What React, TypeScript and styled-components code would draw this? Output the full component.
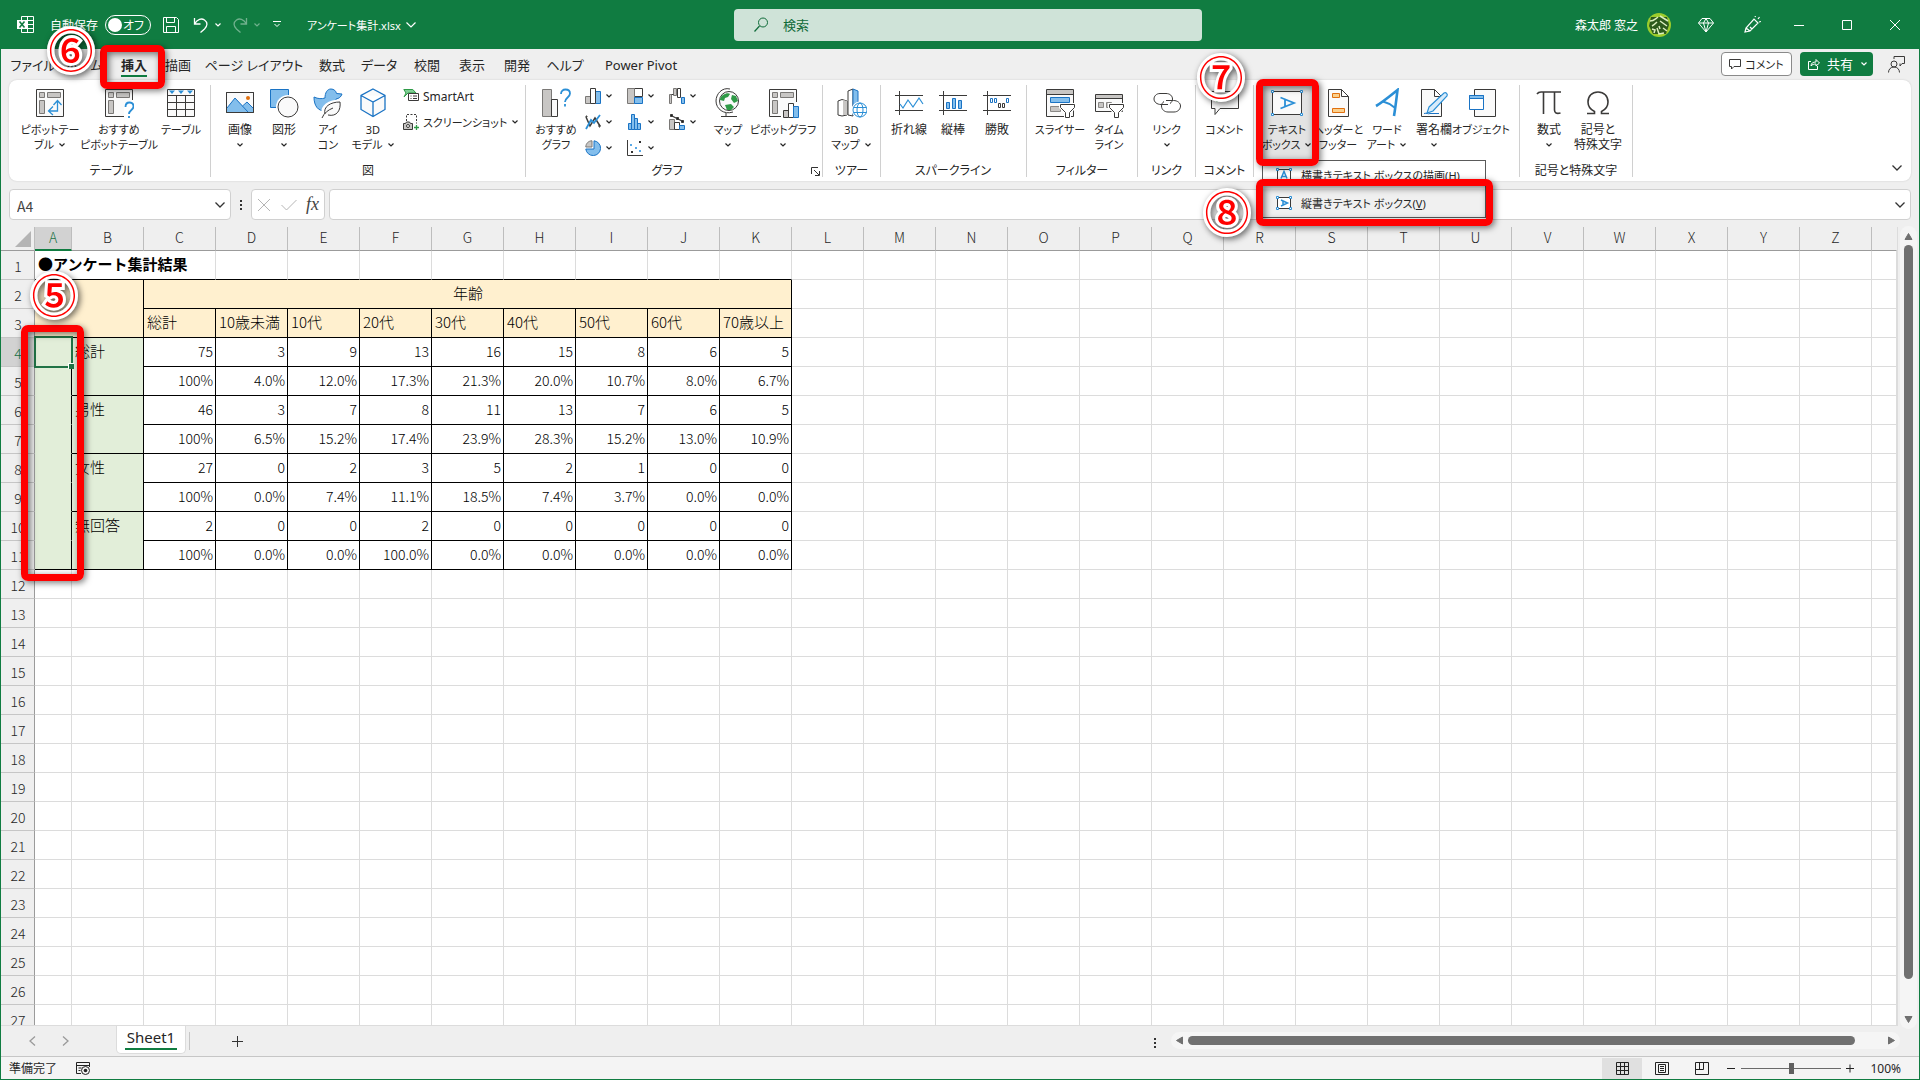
import React from "react";
import styled, { createGlobalStyle, css } from "styled-components";

const GREEN = "#107c41";
const INK = "#262626";
const BLUE = "#2b8fd6";
const SKY = "#83beec";
const GREY = "#c8c6c4";
const UI_FONT = `"Noto Sans", "Noto Sans CJK JP", sans-serif`;
const CELL_FONT = `"Noto Sans CJK JP", sans-serif`;

const GlobalStyle = createGlobalStyle`
  *, *::before, *::after { box-sizing: border-box; }
  body { margin: 0; background: #efefef; }
  button, input { font: inherit; color: inherit; }
  button { padding: 0; border: 0; background: none; }
  svg { display: block; flex: none; }
`;

const Window = styled.div`
  position: relative;
  display: flex;
  flex-direction: column;
  height: 100vh;
  overflow: hidden;
  border: 1px solid ${GREEN};
  border-top: 0;
  background: #efefef;
  color: ${INK};
  font-family: ${UI_FONT};
  font-size: 12px;
  font-feature-settings: "palt";
`;

/* ---------- title bar ---------- */

const TitleBar = styled.header`
  display: grid;
  grid-template-columns: 1fr 468px 1fr;
  align-items: center;
  flex: none;
  height: 49px;
  padding: 8px 0 8px 16px;
  background: ${GREEN};
  color: #fff;
`;

const TitleLeft = styled.div`
  display: flex;
  align-items: center;
`;

const AutoSave = styled.label`
  display: flex;
  align-items: center;
  gap: 7px;
  width: 102px;
  margin: 0 11px 0 16px;
  white-space: nowrap;
`;

const Pill = styled.span`
  display: flex;
  align-items: center;
  justify-content: space-between;
  width: 46px;
  height: 20px;
  padding: 0 6px 0 2px;
  border: 1px solid #fff;
  border-radius: 10px;
`;

const PillKnob = styled.input`
  appearance: none;
  width: 14px;
  height: 14px;
  margin: 0;
  border-radius: 50%;
  background: #fff;
`;

const BarButton = styled.button<{ $w: number; $dim?: boolean }>`
  display: flex;
  align-items: center;
  gap: 5px;
  width: ${(p) => p.$w}px;
  opacity: ${(p) => (p.$dim ? 0.4 : 1)};
`;

const FileName = styled.button`
  display: flex;
  align-items: center;
  gap: 5px;
  font-size: 11px;
  white-space: nowrap;
`;

const Search = styled.label`
  display: flex;
  align-items: center;
  gap: 14px;
  height: 32px;
  padding: 0 20px;
  border-radius: 4px;
  background: #cfe3d8;
  color: #0f6b39;
`;

const SearchInput = styled.input`
  flex: 1;
  min-width: 0;
  padding: 0;
  border: 0;
  outline: 0;
  background: transparent;
  font-size: 13px;
  &::placeholder { color: #0f6b39; opacity: 1; }
`;

const TitleRight = styled.div`
  display: flex;
  align-items: center;
  justify-content: flex-end;
`;

const UserName = styled.span`
  margin-right: 9px;
`;

const Avatar = styled.span`
  margin-right: 12px;
`;

const CaptionButton = styled.button<{ $w: number }>`
  display: flex;
  justify-content: center;
  width: ${(p) => p.$w}px;
`;

/* ---------- tabs ---------- */

const TabStrip = styled.nav`
  display: flex;
  align-items: center;
  flex: none;
  height: 31px;
  padding: 0 14px 0 6px;
`;

const Tab = styled.button<{ $w: number; $active?: boolean }>`
  display: flex;
  justify-content: center;
  width: ${(p) => p.$w}px;
  font-size: 13px;
  line-height: 20px;
  white-space: nowrap;
  ${(p) =>
    p.$active &&
    css`
      font-weight: 700;
      text-decoration: underline;
      text-decoration-color: ${GREEN};
      text-decoration-thickness: 2px;
      text-underline-offset: 5px;
    `}
`;

const Spacer = styled.span`
  flex: 1;
`;

const PlainAction = styled.button`
  display: flex;
  align-items: center;
  justify-content: center;
  gap: 4px;
  width: 71px;
  height: 24px;
  margin: 0 8px 2px 0;
  border: 1px solid #8a8a8a;
  border-radius: 4px;
  background: #fff;
  font-size: 11px;
`;

const ShareAction = styled.button`
  display: flex;
  align-items: center;
  justify-content: space-between;
  width: 73px;
  height: 24px;
  margin: 0 15px 2px 0;
  padding: 0 5px 0 8px;
  border-radius: 4px;
  background: ${GREEN};
  color: #fff;
  font-size: 13px;
`;

/* ---------- ribbon ---------- */

const Ribbon = styled.section`
  position: relative;
  display: flex;
  flex: none;
  margin: 0 8px;
  padding: 5px 0 4px;
  border-radius: 8px;
  background: #fff;
  box-shadow: 0 0 2px rgba(0, 0, 0, 0.16);
`;

const Group = styled.div<{ $w: number; $pad?: number }>`
  display: flex;
  flex-direction: column;
  flex: none;
  width: ${(p) => p.$w}px;
  padding-left: ${(p) => p.$pad ?? 0}px;
  border-right: 1px solid #d0d0d0;
`;

const Tools = styled.div<{ $center?: boolean }>`
  display: flex;
  height: 77px;
  justify-content: ${(p) => (p.$center ? "center" : "flex-start")};
`;

const GroupLabel = styled.div<{ $pad?: number }>`
  display: flex;
  justify-content: center;
  height: 15px;
  padding-right: ${(p) => p.$pad ?? 0}px;
  line-height: 17px;
  white-space: nowrap;
`;

const Launcher = styled.button`
  position: absolute;
  left: 802px;
  bottom: 5px;
`;

const ToolButton = styled.button<{ $w: number; $on?: boolean }>`
  display: flex;
  flex-direction: column;
  align-items: center;
  flex: none;
  width: ${(p) => p.$w}px;
  padding-top: 3px;
  background: ${(p) => (p.$on ? "#e3e3e3" : "transparent")};
`;

const ToolText = styled.span<{ $compact?: boolean }>`
  display: flex;
  flex-direction: column;
  align-items: center;
  margin-top: 4px;
  font-size: ${(p) => (p.$compact ? 11 : 12)}px;
  line-height: 15px;
  white-space: nowrap;
`;

const ToolLine = styled.span`
  display: flex;
  align-items: center;
  justify-content: center;
  gap: 4px;
  height: 15px;
`;

const MiniList = styled.div`
  display: grid;
  grid-auto-rows: 22px;
  gap: 4px 0;
  margin-left: 7px;
`;

const MiniGrid = styled(MiniList)`
  grid-template-columns: repeat(3, 42px);
`;

const MiniButton = styled.button<{ $compact?: boolean }>`
  display: flex;
  align-items: center;
  gap: 4px;
  font-size: ${(p) => (p.$compact ? 11 : 12)}px;
  white-space: nowrap;
`;

const Collapse = styled.button`
  margin: auto 8px 5px auto;
`;

const Menu = styled.div`
  position: absolute;
  z-index: 2;
  top: 80px;
  left: 1253px;
  width: 224px;
  border: 1px solid #5a5a5a;
  background: #fff;
`;

const MenuItem = styled.button<{ $on?: boolean }>`
  display: flex;
  align-items: center;
  gap: 9px;
  width: 100%;
  height: 28px;
  padding-left: 13px;
  background: ${(p) => (p.$on ? "#f0f0f0" : "#fff")};
  font-size: 11px;
  white-space: nowrap;
`;

/* ---------- formula bar ---------- */

const FormulaBar = styled.div`
  display: flex;
  flex: none;
  height: 46px;
  padding: 8px 8px 7px;
`;

const Box = styled.div<{ $w?: number }>`
  display: flex;
  align-items: center;
  flex: ${(p) => (p.$w ? `0 0 ${p.$w}px` : "1")};
  min-width: 0;
  padding-right: 4px;
  border: 1px solid #d0d0d0;
  border-radius: 4px;
  background: #fff;
`;

const BoxInput = styled.input`
  flex: 1;
  min-width: 0;
  padding: 2px 7px 0;
  border: 0;
  outline: 0;
  background: transparent;
  color: #444;
  font-family: ${CELL_FONT};
  font-size: 14px;
`;

const Dots = styled.span`
  display: flex;
  flex-direction: column;
  align-items: center;
  justify-content: center;
  gap: 2px;
  width: 20px;
`;

const Dot = styled.i`
  width: 2px;
  height: 2px;
  background: #333;
`;

const FxBox = styled(Box)`
  justify-content: space-between;
  margin-right: 4px;
  padding: 0 5px 0 5px;
`;

const Fx = styled.button`
  color: #444;
  font-family: "Liberation Serif", serif;
  font-size: 18px;
  font-style: italic;
`;

/* ---------- sheet ---------- */

const SheetArea = styled.main`
  display: flex;
  flex: 1;
  min-height: 0;
`;

const Viewport = styled.div`
  flex: 1;
  min-width: 0;
  overflow: hidden;
  border-right: 1px solid #dcdcdc;
  border-bottom: 1px solid #dcdcdc;
`;

const Grid = styled.table`
  width: 100%;
  table-layout: fixed;
  border-collapse: separate;
  border-spacing: 0;
  font-family: ${CELL_FONT};
  font-feature-settings: normal;
  font-size: 15px;
`;

const Col = styled.col<{ $w?: number }>`
  width: ${(p) => (p.$w ? `${p.$w}px` : "auto")};
`;

const ColHead = styled.th<{ $on?: boolean; $open?: boolean }>`
  height: 24px;
  padding: 0;
  border-right: 1px solid ${(p) => (p.$open ? "#efefef" : "#bdbdbd")};
  border-bottom: ${(p) => (p.$on ? `2px solid ${GREEN}` : "1px solid #9b9b9b")};
  background: ${(p) => (p.$on ? "#d2d2d2" : "#efefef")};
  color: ${(p) => (p.$on ? "#217346" : INK)};
  font-size: 14px;
  font-weight: 300;
  line-height: 20px;
  vertical-align: top;
`;

const Corner = styled.th`
  height: 24px;
  padding: 0 3px 3px 14px;
  border-right: 1px solid #bdbdbd;
  border-bottom: 1px solid #9b9b9b;
  vertical-align: bottom;
`;

const RowHead = styled.th<{ $on?: boolean }>`
  height: 29px;
  padding: 2px 0 0 1px;
  border-right: 1px solid #9b9b9b;
  border-bottom: 1px solid #c6c6c6;
  background: ${(p) => (p.$on ? "#d2d2d2" : "#efefef")};
  color: ${(p) => (p.$on ? "#217346" : INK)};
  font-size: 14px;
  font-weight: 300;
  line-height: 26px;
`;

const FILLS = { none: "#fff", head: "#fff0cf", side: "#e2eed9" };

type Edge = "line" | "grid" | "none";
const EDGES = { line: "#000", grid: "#dcdcdc", none: "transparent" };

const Cell = styled.td<{
  $right?: Edge;
  $bottom?: Edge;
  $fill?: keyof typeof FILLS;
  $align?: "left" | "right" | "center";
  $bold?: boolean;
}>`
  position: relative;
  height: 29px;
  padding: 0 2px 0 3px;
  border-right: 1px solid ${(p) => EDGES[p.$right ?? "grid"]};
  border-bottom: 1px solid ${(p) => EDGES[p.$bottom ?? "grid"]};
  background: ${(p) => FILLS[p.$fill ?? "none"]};
  color: #000;
  font-size: ${(p) => (p.$align === "right" ? 14 : 15)}px;
  font-weight: ${(p) => (p.$bold ? 700 : 300)};
  line-height: 26px;
  text-align: ${(p) => p.$align ?? "left"};
  vertical-align: top;
  white-space: nowrap;
`;

const Selection = styled.span`
  position: absolute;
  z-index: 1;
  inset: -2px -2px -2px -1px;
  border: 2px solid #217346;
  &::after {
    content: "";
    position: absolute;
    right: -3px;
    bottom: -3px;
    width: 6px;
    height: 6px;
    border: 1px solid #fff;
    border-width: 1px 0 0 1px;
    background: #217346;
  }
`;

const VScroll = styled.div`
  display: flex;
  flex-direction: column;
  align-items: center;
  flex: none;
  gap: 4px;
  width: 17px;
  margin: -1px 2px -3px;
  padding: 6px 0 5px;
  border-radius: 9px;
  background: #f5f5f5;
`;

const VThumb = styled.div`
  width: 9px;
  flex: 1;
  margin-bottom: 32px;
  border-radius: 5px;
  background: #707070;
`;

const SheetBar = styled.div`
  display: flex;
  align-items: flex-start;
  flex: none;
  height: 31px;
  border-bottom: 1px solid #c6c6c6;
`;

const NavArrows = styled.div`
  display: flex;
  align-items: center;
  gap: 26px;
  width: 115px;
  height: 30px;
  padding-left: 28px;
`;

const SheetTab = styled.button`
  width: 70px;
  height: 28px;
  padding-bottom: 3px;
  border: 1px solid #dcdcdc;
  border-top: 0;
  border-radius: 0 0 5px 5px;
  background: #fff;
  font-size: 15px;
  line-height: 22px;
`;

const SheetTabText = styled.span`
  display: block;
  margin: 0 8px;
  border-bottom: 2px solid ${GREEN};
`;

const AddSheet = styled.button`
  height: 18px;
  margin: 6px 0 0 3px;
  padding-left: 42px;
  border-left: 1px solid #c6c6c6;
`;

const HScroll = styled.div`
  display: flex;
  align-items: center;
  width: 729px;
  height: 17px;
  margin: 6px 19px 0 14px;
  padding: 0 4px;
  border-radius: 9px;
  background: #f5f5f5;
`;

const HThumb = styled.div`
  flex: 1;
  height: 9px;
  margin: 0 32px 0 4px;
  border-radius: 5px;
  background: #707070;
`;

const StatusBar = styled.footer`
  display: flex;
  align-items: center;
  flex: none;
  height: 22px;
  padding: 0 18px 0 8px;
  background: #f4f4f4;
`;

const Macro = styled.button`
  margin-left: 19px;
`;

const ViewButton = styled.button<{ $on?: boolean }>`
  display: flex;
  align-items: center;
  justify-content: center;
  width: 40px;
  height: 21px;
  background: ${(p) => (p.$on ? "#e0e0e0" : "transparent")};
`;

const ZoomRange = styled.input`
  appearance: none;
  width: 100px;
  height: 12px;
  margin: 0 5px;
  background: linear-gradient(#6a6a6a, #6a6a6a) center / 100% 1px no-repeat;
  &::-webkit-slider-thumb {
    appearance: none;
    width: 5px;
    height: 11px;
    background: #606060;
  }
`;

const ZoomText = styled.output`
  width: 34px;
  margin-left: 12px;
  text-align: right;
`;

/* ---------- call-outs ---------- */

const Frame = styled.div<{ $x: number; $y: number; $w: number; $h: number }>`
  position: absolute;
  z-index: 5;
  left: ${(p) => p.$x}px;
  top: ${(p) => p.$y}px;
  width: ${(p) => p.$w}px;
  height: ${(p) => p.$h}px;
  border: 7px solid #f00;
  border-radius: 7px;
  box-shadow: 2px 2px 6px rgba(0, 0, 0, 0.5), inset 2px 2px 7px rgba(0, 0, 0, 0.55);
  pointer-events: none;
`;

const StepMark = styled.span<{ $x: number; $y: number }>`
  position: absolute;
  z-index: 6;
  left: ${(p) => p.$x}px;
  top: ${(p) => p.$y}px;
  width: 48px;
  height: 48px;
  color: #f00;
  font-family: ${CELL_FONT};
  font-feature-settings: normal;
  font-size: 45px;
  font-weight: 500;
  line-height: 46px;
  text-align: center;
  -webkit-text-stroke: 6px #fff;
  paint-order: stroke fill;
  filter: drop-shadow(2px 2px 3px rgba(0, 0, 0, 0.6));
`;

/* ---------- icons ---------- */

type P = { children: React.ReactNode; w?: number; h?: number };
const Svg = ({ children, w = 30, h = w }: P) => (
  <svg width={w} height={h} viewBox={`0 0 ${w} ${h}`} fill="none" stroke="#3b3a39" aria-hidden="true">
    {children}
  </svg>
);

const Chevron = ({ big }: { big?: boolean }) =>
  big ? (
    <Svg w={12} h={8}><path d="M1.500 1.500 6 6l4.500-4.500" stroke="#333" strokeWidth="1.300" /></Svg>
  ) : (
    <Svg w={8} h={6}><path d="M1.500 1.500 4 4l2.500-2.500" stroke="currentColor" strokeWidth="1.200" /></Svg>
  );

const PivotBase = () => (
  <g fill={GREY} stroke="#7a7876">
    <path d="M4.500 4.500h5v5h-5zM12.500 4.500h13v5h-13zM4.500 12.500h5v13h-5z" />
  </g>
);

const icons = {
  pivot: (
    <Svg>
      <path d="M1.500 1.500h27v27h-27z" fill="#fafafa" />
      <PivotBase />
      <path d="M14 23h8.500V13M18 18.500 13.500 23l4.500 4M18.500 17l4-4.500 4 4.500" stroke={BLUE} strokeWidth="1.300" />
    </Svg>
  ),
  pivotAsk: (
    <Svg>
      <path d="M28.500 12V1.500h-27v27H20" fill="#fafafa" />
      <PivotBase />
      <path d="M20 15h11v16H20z" fill="#fff" stroke="none" />
      <path d="M21.500 19c0-3 1.800-4.500 4-4.500s4 1.500 4 4c0 3.500-4.500 3.500-4.500 7.500M25 28v2.500" stroke={BLUE} strokeWidth="1.800" />
    </Svg>
  ),
  table: (
    <Svg>
      <path d="M1.500 1.500h27v27h-27z" fill="#fafafa" />
      <path d="M1.500 7.500h27M1.500 14.500h27M1.500 21.500h27M10.500 7.500v21M19.500 7.500v21" />
      <path d="M3 2.500h6L6 6zM12 2.500h6L15 6zM21 2.500h6L24 6z" fill={BLUE} stroke="none" />
    </Svg>
  ),
  picture: (
    <Svg>
      <path d="M1.500 4.500h27v20h-27z" fill="#fafafa" />
      <path d="M2 20 10 10l8 8 4-4 6 6v4H2z" fill={SKY} stroke="none" />
      <path d="M2 20 10 10l13 14M17.500 18l4.500-4 6 6" stroke="#1a73c4" />
      <path d="M1.500 4.500h27v20h-27z" />
      <circle cx="23" cy="10" r="2" fill="#e07010" stroke="none" />
    </Svg>
  ),
  shapes: (
    <Svg>
      <path d="M1.500 1.500h18v18h-18z" fill={SKY} stroke="#1a73c4" />
      <circle cx="19" cy="19" r="12" fill="#fff" stroke="none" />
      <circle cx="19" cy="19" r="10" fill="#fafafa" />
    </Svg>
  ),
  icons: (
    <Svg>
      <path d="M1 9c4 2 8 2 11 1 0-5 2-9 6-9 3 0 5 2 5.500 4.500L29 6c-1 3-3 4.500-6 5 1 8-5 12-11 12C5 23 1 18 1 9z" fill={SKY} stroke="#1a73c4" />
      <path d="M10 28c-2-10 6-15 18-15 1 9-3 16-13 15z" fill="#fff" stroke="#fff" strokeWidth="3" />
      <path d="M12 26c-2-7 5-12 15-12 1 8-3 15-12 13M9 30c2-5 6-8 11-10" fill="#fafafa" />
    </Svg>
  ),
  cube: (
    <Svg>
      <path d="M15 1 27 7.500v14L15 28.500 3 21.500v-14zM3 7.500l12 6.500 12-6.500M15 14v14" fill="#fafafa" stroke="#1a73c4" strokeWidth="1.300" />
    </Svg>
  ),
  chartAsk: (
    <Svg>
      <path d="M1.500 1.500h9v27h-9z" fill={GREY} stroke="#7a7876" />
      <path d="M10.500 11.500h6v17h-6z" fill="#fafafa" />
      <path d="M20 6c0-3 2-4.500 4.500-4.500s4.500 1.500 4.500 4c0 4-5 4-5 8.500M24 16v2.500" stroke={BLUE} strokeWidth="1.800" />
    </Svg>
  ),
  globe: (
    <Svg>
      <circle cx="16" cy="13" r="9.500" fill="#fafafa" />
      <path d="M10 7c3-2 6-2 7-1l-2 3-3 1-1 3-4-1c0-2 1-4 3-5zM19 7l4 1 2 5-4 2-3-4zM12 17l6-1 3 3-3 3h-4z" fill="#2f9a47" stroke="none" />
      <path d="M17 1C9-1 3 6 3 13c0 8 8 14 17 11M13 25v3M8 28.500h16" />
    </Svg>
  ),
  pivotChart: (
    <Svg w={32} h={30}>
      <path d="M14 28.500H2.500v-27h27V14" fill="#fafafa" />
      <path d="M5.500 4.500h5v5h-5zM13.500 4.500h13v5h-13zM5.500 12.500h5v13h-5z" fill={GREY} stroke="#7a7876" />
      <path d="M16.500 22.500h5v7h-5z" fill={GREY} />
      <path d="M21.500 15.500h5v14h-5z" fill="#fff" />
      <path d="M26.500 18.500h5v11h-5z" fill={SKY} stroke="#1a73c4" />
    </Svg>
  ),
  map3d: (
    <Svg>
      <path d="M1 13l4-1.500 5 1.500v14l-5 1-4-1z" fill="#fff" />
      <path d="M6 12l4 1v14H6z" fill={GREY} stroke="none" />
      <path d="M11 3l5-2v27l-5-1z" fill="#fff" />
      <path d="M16 1l5 2v24h-5z" fill={SKY} stroke="#1a73c4" />
      <circle cx="23" cy="22" r="8.500" fill="#fff" stroke="none" />
      <circle cx="23" cy="22" r="7" fill="#fff" stroke={BLUE} />
      <ellipse cx="23" cy="22" rx="3" ry="7" stroke={BLUE} />
      <path d="M16.500 19.500h13M16.500 24.500h13" stroke={BLUE} />
    </Svg>
  ),
  sparkLine: (
    <Svg>
      <path d="M1 7.500h28M1 22.500h28M5.500 3v24" />
      <path d="m6 16 3 4 5-8 5 7 6-9 4 6" stroke={BLUE} strokeWidth="1.200" />
    </Svg>
  ),
  sparkBar: (
    <Svg>
      <path d="M1 7.500h28M1 22.500h28M5.500 3v24" />
      <path d="M8.500 14.500h3v6h-3zM14.500 10.500h3v10h-3zM20.500 12.500h3v8h-3z" fill={SKY} stroke="#1a73c4" />
    </Svg>
  ),
  sparkWin: (
    <Svg>
      <path d="M1 7.500h28M1 22.500h28M5.500 3v24" />
      <path d="M8.500 10.500h2v4h-2zM12.500 10.500h2v4h-2zM24.500 10.500h2v4h-2z" fill="#fff" stroke="#1a73c4" />
      <path d="M16.500 15.500h2v4h-2zM20.500 15.500h2v4h-2z" fill="#fff" />
    </Svg>
  ),
  slicer: (
    <Svg>
      <path d="M1.500 1.500h27v27h-27z" fill="#fafafa" />
      <path d="M2 2h26v4H2z" fill={GREY} stroke="none" />
      <path d="M1.500 6.500h27" />
      <path d="M5.500 9.500h19v5h-19z" fill={SKY} stroke="#1a73c4" />
      <path d="M5.500 18.500h10v5h-10z" fill={GREY} stroke="#8a8886" />
      <path d="M15.500 16.500h14v3l-5 5v5h-4v-5l-5-5z" fill="#fff" stroke="#fff" strokeWidth="3" />
      <path d="M15.500 16.500h14v3l-5 5v5h-4v-5l-5-5z" fill="#fff" />
    </Svg>
  ),
  timeline: (
    <Svg>
      <path d="M1.500 6.500h27v17h-27z" fill="#fafafa" />
      <path d="M2 7h26v3H2z" fill={GREY} stroke="none" />
      <path d="M1.500 10.500h27" />
      <path d="M4.500 14.500h5v5h-5zM12.500 14.500h5v5h-5z" fill={GREY} stroke="#8a8886" />
      <path d="M15.500 16.500h14v3l-5 5v5h-4v-5l-5-5z" fill="#fff" stroke="#fff" strokeWidth="3" />
      <path d="M15.500 16.500h14v3l-5 5v5h-4v-5l-5-5z" fill="#fff" />
    </Svg>
  ),
  link: (
    <Svg>
      <path d="M16 16.500H9c-4 0-7-2.500-7-5.500s2.500-5.500 6-5.500h6c4 0 6.500 2.500 6.500 5.500 0 2-1 3.500-2.500 4.500" />
      <path d="M14 12.500h7.500c4 0 7 2.500 7 5.500s-2.500 6-6.500 6h-6c-3.500 0-6.500-2.500-6.500-6 0-2 1-3.500 2.500-4.500" />
    </Svg>
  ),
  comment: (
    <Svg>
      <path d="M1.500 3.500h27v17H10l-5 6v-6H1.500z" fill="#fafafa" />
      <path d="M7 8v6" stroke="#2f9a47" strokeWidth="2" />
    </Svg>
  ),
  textBox: (
    <Svg w={32} h={30}>
      <path d="M1.500 3.500h29v23h-29z" fill="#fafafa" />
      <path d="M9.500 9.500 23 15 9.500 20.500M14 11.500v7" stroke={BLUE} strokeWidth="1.800" />
      <path d="M.5 2.500h2v2h-2zM29.500 2.500h2v2h-2zM.5 25.500h2v2h-2zM29.500 25.500h2v2h-2z" fill="#fff" stroke={BLUE} />
    </Svg>
  ),
  header: (
    <Svg>
      <path d="M5.500 1.500h13l7 7v20h-20zM18.500 1.500v7h7" fill="#fafafa" />
      <path d="M9.500 5.500h7v4h-7zM9.500 20.500h12v4h-12z" fill="#fbd08c" stroke="#e07010" />
    </Svg>
  ),
  wordArt: (
    <Svg>
      <path d="M4 18C11 14 18 8 25.500 2c-1 8-2 17-3.500 26" stroke={BLUE} strokeWidth="2.600" />
      <path d="M11 13.500c4 1 8 3 11.500 6" stroke={BLUE} strokeWidth="2" />
    </Svg>
  ),
  sign: (
    <Svg>
      <path d="M2.500 1.500h13l7 7v20h-20zM15.500 1.500v7h7" fill="#fafafa" />
      <path d="m10 19 15-14c2-1 4 1 3 3L14 23l-6 2z" fill="#d7ebfa" stroke={BLUE} strokeWidth="1.200" />
      <path d="M5 25.500c3-1 4 1 6 0h9" stroke="#1a73c4" />
    </Svg>
  ),
  object: (
    <Svg>
      <path d="M8.500 1.500h21v27h-21z" fill="#fafafa" />
      <path d="M3.500 7.500h14v14h-14z" fill="#fff" stroke="#1a73c4" />
      <path d="M3.500 7.500h14v3h-14z" fill={SKY} stroke="#1a73c4" />
    </Svg>
  ),
  pi: (
    <Svg>
      <path d="M3 6c1-1.500 2-2 4-2h20M9.500 4v22M20.500 4v18c0 3 2 4 6 3" strokeWidth="1.600" />
    </Svg>
  ),
  omega: (
    <Svg>
      <path d="M4 25.500h7.500v-2C7.500 21.500 5 18 5 14 5 8 9 4 15 4s10 4 10 10c0 4-2.500 7.500-6.500 9.500v2H26" strokeWidth="1.600" />
    </Svg>
  ),
};

const minis: Record<string, React.ReactNode> = {
  column: (
    <Svg w={16}>
      <path d="M.5 8.500h5v7h-5z" fill={GREY} stroke="#7a7876" />
      <path d="M10.500 3.500h5v12h-5z" fill={SKY} stroke="#1a73c4" />
      <path d="M5.500.5h5v15h-5z" fill="#fff" />
    </Svg>
  ),
  tree: (
    <Svg w={16}>
      <path d="M7.500.5h8v8h-8z" fill="#fff" />
      <path d="M.5.5h7v15h-7z" fill={GREY} stroke="#7a7876" />
      <path d="M7.500 9.500h8v6h-8z" fill={SKY} stroke="#1a73c4" />
    </Svg>
  ),
  waterfall: (
    <Svg w={16}>
      <path d="M.5 6.500h2v9h-2zM4.500.5h3v7h-3z" fill={GREY} stroke="#7a7876" />
      <path d="M8.500.5h3v9h-3zM2.500 6.500h2" fill="#fff" />
      <path d="M12.500 9.500h3v6h-3z" fill={SKY} stroke="#1a73c4" />
    </Svg>
  ),
  line: (
    <Svg w={16}>
      <path d="m1 3 4 9 5-8 5 8" strokeWidth="1.500" />
      <path d="m1 15 5-9 3 3 6-8" stroke={BLUE} strokeWidth="1.800" />
      <path d="M1 2h1v1H1zM14 11h1v2h-1z" />
    </Svg>
  ),
  histogram: (
    <Svg w={16}>
      <path d="M1.500 9.500h3v6h-3zM4.500.5h3v15h-3zM7.500 4.500h3v11h-3zM10.500 9.500h3v6h-3z" fill={SKY} stroke="#1a73c4" />
    </Svg>
  ),
  combo: (
    <Svg w={16}>
      <path d="M.5 5.500h5v10h-5z" fill={GREY} stroke="#7a7876" />
      <path d="M5.500 8.500h5v7h-5z" fill="#fff" />
      <path d="M10.500 11.500h5v4h-5z" fill={SKY} stroke="#1a73c4" />
      <path d="m2 1.500 12 6" strokeWidth="1.300" />
      <path d="M1.500.5h2v2h-2zM7.500 3.500h2v2h-2zM12.500 6.500h2v2h-2z" fill="#222" />
    </Svg>
  ),
  pie: (
    <Svg w={16}>
      <path d="M9 .8A7.400 7.400 0 1 1 .8 9H9z" fill={SKY} stroke="#1a73c4" />
      <path d="M7 .8V7H.8C.8 3.500 3.500.8 7 .8z" fill={GREY} stroke="#7a7876" />
    </Svg>
  ),
  scatter: (
    <Svg w={16}>
      <path d="M.5 0v15.500H16" />
      <path d="M12 1h2v2h-2zM4 11h2v2H4z" fill="#333" stroke="none" />
      <path d="M3 4h2v2H3zM8 7h2v2H8zM12 10h2v2h-2z" fill="#5aa9e6" stroke="none" />
    </Svg>
  ),
  smart: (
    <Svg w={16}>
      <path d="M.8 1.500h9L13 5H5l-4 4 2-4z" fill="#7fcf94" stroke="#2f9a47" />
      <path d="M5.500 5.500h10v7h-10z" fill="#fff" />
      <path d="M7.500 8h1M10 8h4M7.500 10.500h1M10 10.500h4" />
    </Svg>
  ),
  shot: (
    <Svg w={16}>
      <path d="M3.500 7V.5h10v9" strokeDasharray="2 1.500" />
      <path d="M.5 9.500h2l1-1.500h3l1 1.500h2v6h-9z" fill={GREY} />
      <circle cx="5" cy="12" r="1.500" fill="#fff" />
      <path d="M13.500 11v5M11 13.500h5" stroke="#2f9a47" strokeWidth="1.300" />
    </Svg>
  ),
};

const MenuGlyph = ({ turned }: { turned?: boolean }) => (
  <Svg w={16} h={14}>
    <path d="M1.500 1.500h13v11h-13z" fill="#fff" />
    <path
      d={turned ? "m5 4 6.500 3L5 10M7 5v4" : "M5 10.500 8 3.500l3 7M6 8.500h4"}
      stroke={BLUE}
      strokeWidth="1.500"
    />
    <path d="M.5.5h2v2h-2zM13.500.5h2v2h-2zM.5 11.500h2v2h-2zM13.500 11.500h2v2h-2z" fill="#fff" stroke={BLUE} />
  </Svg>
);

const Arrow = ({ d }: { d: string }) => (
  <Svg w={9} h={9}><path d={d} fill="#707070" stroke="#707070" strokeLinejoin="round" /></Svg>
);

/* ---------- pieces ---------- */

type ToolProps = {
  icon: React.ReactNode;
  lines: string[];
  w: number;
  drop?: boolean;
  on?: boolean;
  compact?: boolean;
};

const Tool = ({ icon, lines, w, drop, on, compact }: ToolProps) => (
  <ToolButton $w={w} $on={on}>
    {icon}
    <ToolText $compact={compact}>
      {lines.map((line, i) => (
        <ToolLine key={i}>
          {line}
          {drop && i === 1 && <Chevron />}
        </ToolLine>
      ))}
      {drop && lines.length === 1 && <ToolLine><Chevron /></ToolLine>}
    </ToolText>
  </ToolButton>
);

const TABS: [string, number][] = [
  ["ファイル", 52], ["ホーム", 50], ["挿入", 50], ["描画", 38], ["ページ レイアウト", 114],
  ["数式", 42], ["データ", 52], ["校閲", 44], ["表示", 46], ["開発", 44], ["ヘルプ", 52], ["Power Pivot", 100],
];

const LETTERS = "ABCDEFGHIJKLMNOPQRSTUVWXYZ".split("");
const AGES = ["総計", "10歳未満", "10代", "20代", "30代", "40代", "50代", "60代", "70歳以上"];
const SIDE = ["総計", "男性", "女性", "無回答"];
const DATA = [
  ["75", "3", "9", "13", "16", "15", "8", "6", "5"],
  ["100%", "4.0%", "12.0%", "17.3%", "21.3%", "20.0%", "10.7%", "8.0%", "6.7%"],
  ["46", "3", "7", "8", "11", "13", "7", "6", "5"],
  ["100%", "6.5%", "15.2%", "17.4%", "23.9%", "28.3%", "15.2%", "13.0%", "10.9%"],
  ["27", "0", "2", "3", "5", "2", "1", "0", "0"],
  ["100%", "0.0%", "7.4%", "11.1%", "18.5%", "7.4%", "3.7%", "0.0%", "0.0%"],
  ["2", "0", "0", "2", "0", "0", "0", "0", "0"],
  ["100%", "0.0%", "0.0%", "100.0%", "0.0%", "0.0%", "0.0%", "0.0%", "0.0%"],
];

const blanks = (n: number) => Array.from({ length: n }, (_, i) => <Cell key={`b${i}`} />);

const rowCells = (row: number) => {
  if (row === 1)
    return (
      <>
        <Cell colSpan={3} $bold $bottom="line">●アンケート集計結果</Cell>
        {LETTERS.slice(3, 11).map((l) => <Cell key={l} $bottom="line" />)}
        {blanks(16)}
      </>
    );
  if (row === 2)
    return (
      <>
        <Cell colSpan={2} rowSpan={2} $fill="head" $right="line" $bottom="line" />
        <Cell colSpan={9} $fill="head" $right="line" $bottom="line" $align="center">年齢</Cell>
        {blanks(16)}
      </>
    );
  if (row === 3)
    return (
      <>
        {AGES.map((a) => <Cell key={a} $fill="head" $right="line" $bottom="line">{a}</Cell>)}
        {blanks(16)}
      </>
    );
  if (row <= 11)
    return (
      <>
        <Cell $fill="side" $right="line" $bottom={row === 11 ? "line" : "none"}>
          {row === 4 && <Selection />}
        </Cell>
        {row % 2 === 0 && (
          <Cell rowSpan={2} $fill="side" $right="line" $bottom="line">{SIDE[(row - 4) / 2]}</Cell>
        )}
        {DATA[row - 4].map((v, i) => (
          <Cell key={i} $right="line" $bottom="line" $align="right">{v}</Cell>
        ))}
        {blanks(16)}
      </>
    );
  return blanks(27);
};

const App = () => (
  <Window>
    <GlobalStyle />

    <TitleBar>
      <TitleLeft>
        <Svg w={17}>
          <path d="M4.500.5h12v16h-12zM10.500.5v16M4.500 4.500h12M4.500 8.500h12M4.500 12.500h12" stroke="#fff" />
          <path d="M0 4h10v9H0z" fill="#fff" stroke="none" />
          <path d="m2.500 5.500 5 6M7.500 5.500l-5 6" stroke={GREEN} strokeWidth="1.600" />
        </Svg>
        <AutoSave>
          自動保存
          <Pill><PillKnob type="checkbox" />オフ</Pill>
        </AutoSave>
        <BarButton $w={30} aria-label="上書き保存">
          <Svg w={16}><path d="M.5.5h13l2 2v13H.5zM3.500.5v5h8v-5M3.500 15.500v-6h9v6" stroke="#fff" /></Svg>
        </BarButton>
        <BarButton $w={39} aria-label="元に戻す">
          <Svg w={16}><path d="M1.500 1v6h6M1.500 7c3-5 7-6 10-4 3.500 2.500 3 6 0 9l-4 3.500" stroke="#fff" strokeWidth="1.300" /></Svg>
          <Chevron />
        </BarButton>
        <BarButton $w={41} $dim aria-label="やり直し">
          <Svg w={16}><path d="M14.500 1v6h-6M14.500 7c-3-5-7-6-10-4-3.500 2.500-3 6 0 9l4 3.500" stroke="#fff" strokeWidth="1.300" /></Svg>
          <Chevron />
        </BarButton>
        <BarButton $w={34} aria-label="クイック アクセス">
          <Svg w={8} h={7}><path d="M0 .5h8M1.500 3 4 5.500 6.500 3" stroke="#fff" /></Svg>
        </BarButton>
        <FileName>
          アンケート集計.xlsx
          <Svg w={10} h={8}><path d="M.5 1.500 5 6l4.500-4.500" stroke="#fff" strokeWidth="1.200" /></Svg>
        </FileName>
      </TitleLeft>
      <Search>
        <Svg w={15}>
          <circle cx="9" cy="5.500" r="4.500" stroke="#0f6b39" />
          <path d="m5.500 9-5 5.500" stroke="#0f6b39" strokeWidth="1.200" />
        </Svg>
        <SearchInput placeholder="検索" aria-label="検索" />
      </Search>
      <TitleRight>
        <UserName>森太郎 窓之</UserName>
        <Avatar>
          <Svg w={24}>
            <circle cx="12" cy="12" r="12" fill="#9ccc2c" stroke="none" />
            <path d="M4 4h16l2 8-3 9H6l-4-8z" fill="#2c5a1c" stroke="none" />
            <path d="M3 8c4 0 5-2 8-4M13 3l8 5M5 13c2-1 3-2 5-4M13 8l7 5M12 13l1 3M5 16l3 1-1 3M10 15l2 6 5-1M16 15l4 3" stroke="#dcefc0" strokeWidth="1.500" />
          </Svg>
        </Avatar>
        <CaptionButton $w={46} aria-label="Premium">
          <Svg w={16}><path d="M4 1.500h8L15.500 6 8 15 .5 6zM.5 6h15M5.500 6 8 15l2.500-9L8 1.500z" stroke="#fff" /></Svg>
        </CaptionButton>
        <CaptionButton $w={46} aria-label="新機能">
          <Svg w={17}><path d="m1 16 1-4 8-9 4 4-8 8zM2 12l4 3M6 11l2 2M11 1l.5-1M14 3l1.500-2M15 6l2-.5" stroke="#fff" strokeWidth="1.200" /></Svg>
        </CaptionButton>
        <CaptionButton $w={48} aria-label="最小化"><Svg w={10}><path d="M0 5.500h10" stroke="#fff" /></Svg></CaptionButton>
        <CaptionButton $w={48} aria-label="最大化"><Svg w={10}><path d="M.5.5h9v9h-9z" stroke="#fff" /></Svg></CaptionButton>
        <CaptionButton $w={48} aria-label="閉じる"><Svg w={10}><path d="m0 0 10 10M10 0 0 10" stroke="#fff" /></Svg></CaptionButton>
      </TitleRight>
    </TitleBar>

    <TabStrip>
      {TABS.map(([name, w]) => (
        <Tab key={name} $w={w} $active={name === "挿入"}>{name}</Tab>
      ))}
      <Spacer />
      <PlainAction>
        <Svg w={12}><path d="M.5 1.500h11v7H5l-2.500 2.500V8.500h-2z" /></Svg>
        コメント
      </PlainAction>
      <ShareAction>
        <Svg w={12}><path d="M3 3.500H.5v8h9V8M3 8c0-3 2-4 5-4V1.500L11.500 5 8 8V6C6 6 4 6.500 3 8z" stroke="#fff" /></Svg>
        共有
        <Chevron />
      </ShareAction>
      <button aria-label="発表者">
        <Svg w={17}>
          <circle cx="6" cy="8" r="3" />
          <path d="M.5 16.500c0-3 2-5.500 5.500-5.500s5.500 2.500 5.500 5.500M6 3V.5h10.500v7H14l-2 2.500V7.500" />
        </Svg>
      </button>
    </TabStrip>

    <Ribbon>
      <Group $w={202} $pad={13}>
        <Tools>
          <Tool w={56} icon={icons.pivot} lines={["ピボットテー", "ブル"]} drop compact />
          <Tool w={82} icon={icons.pivotAsk} lines={["おすすめ", "ピボットテーブル"]} compact />
          <Tool w={42} icon={icons.table} lines={["テーブル"]} compact />
        </Tools>
        <GroupLabel $pad={9}>テーブル</GroupLabel>
      </Group>
      <Group $w={315} $pad={7}>
        <Tools>
          <Tool w={44} icon={icons.picture} lines={["画像"]} drop />
          <Tool w={44} icon={icons.shapes} lines={["図形"]} drop />
          <Tool w={44} icon={icons.icons} lines={["アイ", "コン"]} compact />
          <Tool w={46} icon={icons.cube} lines={["3D", "モデル"]} drop compact />
          <MiniList>
            <MiniButton>{minis.smart}SmartArt</MiniButton>
            <MiniButton $compact>{minis.shot}スクリーンショット<Chevron /></MiniButton>
          </MiniList>
        </Tools>
        <GroupLabel $pad={7}>図</GroupLabel>
      </Group>
      <Group $w={297} $pad={8}>
        <Tools>
          <Tool w={44} icon={icons.chartAsk} lines={["おすすめ", "グラフ"]} compact />
          <MiniGrid>
            {["column", "tree", "waterfall", "line", "histogram", "combo", "pie", "scatter"].map((k) => (
              <MiniButton key={k} aria-label={k}>{minis[k]}<Chevron /></MiniButton>
            ))}
          </MiniGrid>
          <Tool w={34} icon={icons.globe} lines={["マップ"]} drop compact />
          <Tool w={76} icon={icons.pivotChart} lines={["ピボットグラフ"]} drop compact />
        </Tools>
        <GroupLabel $pad={22}>グラフ</GroupLabel>
      </Group>
      <Group $w={58}>
        <Tools $center><Tool w={52} icon={icons.map3d} lines={["3D", "マップ"]} drop compact /></Tools>
        <GroupLabel>ツアー</GroupLabel>
      </Group>
      <Group $w={146} $pad={6}>
        <Tools>
          <Tool w={44} icon={icons.sparkLine} lines={["折れ線"]} />
          <Tool w={44} icon={icons.sparkBar} lines={["縦棒"]} />
          <Tool w={44} icon={icons.sparkWin} lines={["勝敗"]} />
        </Tools>
        <GroupLabel $pad={7}>スパークライン</GroupLabel>
      </Group>
      <Group $w={111} $pad={8}>
        <Tools>
          <Tool w={50} icon={icons.slicer} lines={["スライサー"]} compact />
          <Tool w={48} icon={icons.timeline} lines={["タイム", "ライン"]} compact />
        </Tools>
        <GroupLabel $pad={8}>フィルター</GroupLabel>
      </Group>
      <Group $w={58}>
        <Tools $center><Tool w={50} icon={icons.link} lines={["リンク"]} drop compact /></Tools>
        <GroupLabel>リンク</GroupLabel>
      </Group>
      <Group $w={58}>
        <Tools $center><Tool w={50} icon={icons.comment} lines={["コメント"]} compact /></Tools>
        <GroupLabel>コメント</GroupLabel>
      </Group>
      <Group $w={266} $pad={6}>
        <Tools>
          <Tool w={54} icon={icons.textBox} lines={["テキスト", "ボックス"]} drop on compact />
          <Tool w={48} icon={icons.header} lines={["ヘッダーと", "フッター"]} compact />
          <Tool w={50} icon={icons.wordArt} lines={["ワード", "アート"]} drop compact />
          <Tool w={44} icon={icons.sign} lines={["署名欄"]} drop />
          <Tool w={50} icon={icons.object} lines={["オブジェクト"]} compact />
        </Tools>
      </Group>
      <Group $w={113} $pad={7}>
        <Tools>
          <Tool w={44} icon={icons.pi} lines={["数式"]} drop />
          <Tool w={54} icon={icons.omega} lines={["記号と", "特殊文字"]} />
        </Tools>
        <GroupLabel $pad={7}>記号と特殊文字</GroupLabel>
      </Group>
      <Collapse aria-label="リボンを折りたたむ"><Chevron big /></Collapse>
      <Launcher aria-label="グラフの設定">
        <Svg w={9}><path d="M.5 7V.5H7M3 3l5 5M8.500 4v4.500H4" stroke="#333" /></Svg>
      </Launcher>
      <Menu>
        <MenuItem><MenuGlyph /><span>横書きテキスト ボックスの描画(<u>H</u>)</span></MenuItem>
        <MenuItem $on><MenuGlyph turned /><span>縦書きテキスト ボックス(<u>V</u>)</span></MenuItem>
      </Menu>
    </Ribbon>

    <FormulaBar>
      <Box $w={222}>
        <BoxInput defaultValue="A4" aria-label="名前ボックス" />
        <Chevron big />
      </Box>
      <Dots><Dot /><Dot /><Dot /></Dots>
      <FxBox $w={74}>
        <Svg w={14}><path d="m1 1 12 12M13 1 1 13" stroke="#b5b5b5" /></Svg>
        <Svg w={16} h={12}><path d="m.5 6 5 5L15.500 1" stroke="#b5b5b5" /></Svg>
        <Fx>fx</Fx>
      </FxBox>
      <Box>
        <BoxInput aria-label="数式バー" />
        <Chevron big />
      </Box>
    </FormulaBar>

    <SheetArea>
      <Viewport>
        <Grid>
          <colgroup>
            <Col $w={34} />
            <Col $w={37} />
            {LETTERS.slice(1).map((l) => <Col key={l} $w={72} />)}
            <Col />
          </colgroup>
          <thead>
            <tr>
              <Corner><Svg w={16}><path d="M16 0v16H0z" fill="#b4b4b4" stroke="none" /></Svg></Corner>
              {LETTERS.map((l) => <ColHead key={l} scope="col" $on={l === "A"}>{l}</ColHead>)}
              <ColHead $open />
            </tr>
          </thead>
          <tbody>
            {Array.from({ length: 27 }, (_, i) => i + 1).map((row) => (
              <tr key={row}>
                <RowHead scope="row" $on={row === 4}>{row}</RowHead>
                {rowCells(row)}
              </tr>
            ))}
          </tbody>
        </Grid>
      </Viewport>
      <VScroll>
        <Arrow d="M4.500 1.500 8 7.500H1z" />
        <VThumb />
        <Arrow d="M4.500 7.500 8 1.500H1z" />
      </VScroll>
    </SheetArea>

    <SheetBar>
      <NavArrows>
        <Svg w={7} h={10}><path d="M6 .5 1 5l5 4.500" stroke="#9a9a9a" strokeWidth="1.300" /></Svg>
        <Svg w={7} h={10}><path d="m1 .5 5 4.500-5 4.500" stroke="#9a9a9a" strokeWidth="1.300" /></Svg>
      </NavArrows>
      <SheetTab><SheetTabText>Sheet1</SheetTabText></SheetTab>
      <AddSheet aria-label="新しいシート">
        <Svg w={11}><path d="M5.500 0v11M0 5.500h11" stroke="#333" /></Svg>
      </AddSheet>
      <Spacer />
      <Svg w={4} h={30}><path d="M1 13h2M1 17h2M1 21h2" stroke="#333" strokeWidth="2" /></Svg>
      <HScroll>
        <Arrow d="M1.500 4.500 7.500 1v7z" />
        <HThumb />
        <Arrow d="M7.500 4.500 1.500 1v7z" />
      </HScroll>
    </SheetBar>

    <StatusBar>
      準備完了
      <Macro aria-label="マクロの記録">
        <Svg w={14} h={13}>
          <path d="M5 11.500H.5v-11h13V5M.5 3.500h13M2.500 6h3M2.500 8.500h2" stroke="#222" />
          <circle cx="9.500" cy="8.500" r="4" fill="#f4f4f4" stroke="#222" />
          <circle cx="9.500" cy="8.500" r="1.800" fill="#222" stroke="none" />
        </Svg>
      </Macro>
      <Spacer />
      <ViewButton $on aria-label="標準">
        <Svg w={13}><path d="M.5.5h12v12H.5zM.5 4.500h12M.5 8.500h12M4.500.5v12M8.500.5v12" stroke="#222" /></Svg>
      </ViewButton>
      <ViewButton aria-label="ページ レイアウト">
        <Svg w={14} h={13}><path d="M.5.5h13v12H.5zM3.500 2.500h7v8h-7zM5 4.500h4M5 6.500h4M5 8.500h4" stroke="#222" /></Svg>
      </ViewButton>
      <ViewButton aria-label="改ページ プレビュー">
        <Svg w={14} h={13}><path d="M.5.5h13v12H.5zM.5 7.500h8v-7M4.500.5v7" stroke="#222" /></Svg>
      </ViewButton>
      <Svg w={14} h={9}><path d="M5 4.500h8" stroke="#222" /></Svg>
      <ZoomRange type="range" min="0" max="200" defaultValue="100" aria-label="ズーム" />
      <Svg w={9}><path d="M0 4.500h8M4 .5v8" stroke="#222" /></Svg>
      <ZoomText>100%</ZoomText>
    </StatusBar>

    <Frame $x={99} $y={45} $w={65} $h={44} />
    <Frame $x={1255} $y={79} $w={63} $h={87} />
    <Frame $x={1255} $y={179} $w={237} $h={47} />
    <Frame $x={20} $y={325} $w={63} $h={256} />
    <StepMark $x={29} $y={271}>⑤</StepMark>
    <StepMark $x={46} $y={26}>⑥</StepMark>
    <StepMark $x={1196} $y={53}>⑦</StepMark>
    <StepMark $x={1202} $y={188}>⑧</StepMark>
  </Window>
);

export default App;
